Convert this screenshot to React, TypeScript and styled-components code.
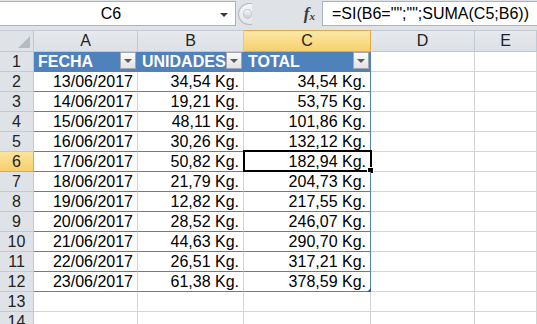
import styled, { createGlobalStyle } from 'styled-components';

const GlobalStyle = createGlobalStyle`
    html, body {
        margin: 0;
        padding: 0;
        background: #ffffff;
        overflow: hidden;
    }
    body {
        font-family: 'Liberation Sans', Arial, sans-serif;
    }
`;

const rows: [string, string, string][] = [
    ['13/06/2017', '34,54 Kg.', '34,54 Kg.'],
    ['14/06/2017', '19,21 Kg.', '53,75 Kg.'],
    ['15/06/2017', '48,11 Kg.', '101,86 Kg.'],
    ['16/06/2017', '30,26 Kg.', '132,12 Kg.'],
    ['17/06/2017', '50,82 Kg.', '182,94 Kg.'],
    ['18/06/2017', '21,79 Kg.', '204,73 Kg.'],
    ['19/06/2017', '12,82 Kg.', '217,55 Kg.'],
    ['20/06/2017', '28,52 Kg.', '246,07 Kg.'],
    ['21/06/2017', '44,63 Kg.', '290,70 Kg.'],
    ['22/06/2017', '26,51 Kg.', '317,21 Kg.'],
    ['23/06/2017', '61,38 Kg.', '378,59 Kg.'],
];

const headers = ['FECHA', 'UNIDADES', 'TOTAL'];
const columns = ['A', 'B', 'C', 'D', 'E'];

const App = () => {
    return (
        <Page>
            <GlobalStyle />
            <FormulaBar>
                <NameBox>
                    <NameText>C6</NameText>
                    <NameArrow />
                </NameBox>
                <FxZone>
                    <Knob>
                        <KnobDot />
                    </Knob>
                    <FxLabel>
                        f<sub>x</sub>
                    </FxLabel>
                </FxZone>
                <FormulaInput>=SI(B6="";"";SUMA(C5;B6))</FormulaInput>
            </FormulaBar>
            <Sheet>
                <Corner>
                    <CornerTriangle />
                </Corner>
                {columns.map((c) => (
                    <ColHeader key={c} $active={c === 'C'}>
                        {c}
                    </ColHeader>
                ))}

                <RowHeader $active={false}>1</RowHeader>
                {headers.map((h, i) => (
                    <HeadCell key={h} $edge={i === 2}>
                        <HeadText>{h}</HeadText>
                        <FilterButton>
                            <FilterArrow />
                        </FilterButton>
                    </HeadCell>
                ))}
                <Cell />
                <Cell />

                {rows.map((r, ri) => {
                    const rowNum = ri + 2;
                    const last = ri === rows.length - 1;
                    return [
                        <RowHeader key={`h${rowNum}`} $active={rowNum === 6}>
                            {rowNum}
                        </RowHeader>,
                        ...r.map((v, ci) => (
                            <DataCell
                                key={`${rowNum}-${ci}`}
                                $edge={ci === 2}
                                $last={last}
                            >
                                {v}
                                {rowNum === 6 && ci === 2 && (
                                    <Selection>
                                        <FillHandle />
                                    </Selection>
                                )}
                                {last && ci === 2 && <ResizeHandle />}
                            </DataCell>
                        )),
                        <Cell key={`d${rowNum}`} />,
                        <Cell key={`e${rowNum}`} />,
                    ];
                })}

                {[13, 14].map((n) => [
                    <RowHeader key={`h${n}`} $active={false}>
                        {n}
                    </RowHeader>,
                    ...columns.map((c) => <Cell key={`${n}${c}`} />),
                ])}
            </Sheet>
        </Page>
    );
};

const Page = styled.div`
    width: 537px;
    height: 324px;
    overflow: hidden;
    background: #dfe3e8;
`;

const FormulaBar = styled.div`
    display: flex;
    align-items: stretch;
    height: 26px;
    padding-top: 1px;
    box-sizing: border-box;
    margin-bottom: 4px;
`;

const NameBox = styled.div`
    display: flex;
    align-items: center;
    width: 236px;
    background: #ffffff;
    border: 1px solid #abb3bd;
    border-left: none;
    box-sizing: border-box;
`;

const NameText = styled.div`
    flex: 1;
    text-align: center;
    font-size: 16px;
    line-height: 24px;
    color: #000;
    padding-left: 2px;
`;

const NameArrow = styled.div`
    width: 0;
    height: 0;
    margin: 2px 7px 0 0;
    border-left: 4px solid transparent;
    border-right: 4px solid transparent;
    border-top: 4px solid #3c3c3c;
`;

const FxZone = styled.div`
    display: flex;
    align-items: center;
    width: 86px;
    padding-left: 2px;
    box-sizing: border-box;
`;

const Knob = styled.div`
    display: flex;
    align-items: center;
    justify-content: center;
    width: 14px;
    height: 22px;
    border: 1px solid #b4bac2;
    border-right: none;
    border-radius: 11px 0 0 11px;
    background: linear-gradient(#f4f5f7, #e3e6ea);
    box-sizing: border-box;
`;

const KnobDot = styled.div`
    width: 8px;
    height: 8px;
    margin-left: 4px;
    border-radius: 50%;
    background: linear-gradient(#f8f8f8, #c9cdd2);
    border: 1px solid #c3c7cc;
`;

const FxLabel = styled.div`
    margin-left: auto;
    margin-right: 7px;
    font-family: 'Liberation Serif', 'Times New Roman', serif;
    font-style: italic;
    font-weight: bold;
    font-size: 17px;
    color: #3a3a3a;

    sub {
        font-size: 11px;
        vertical-align: -1px;
    }
`;

const FormulaInput = styled.div`
    flex: 1;
    background: #ffffff;
    border: 1px solid #abb3bd;
    border-right: none;
    box-sizing: border-box;
    padding-left: 9px;
    font-size: 16px;
    line-height: 24px;
    color: #000;
    white-space: nowrap;
`;

const Sheet = styled.div`
    display: grid;
    grid-template-columns: 34px 104px 106px 127px 104px 1fr;
    grid-template-rows: 22px;
    grid-auto-rows: 20px;
    background: #ffffff;
`;

const Corner = styled.div`
    position: relative;
    background: #dfe3e8;
    border-right: 1px solid #c3c9d0;
    border-bottom: 1px solid #c3c9d0;
    border-top: 1px solid #c3c9d0;
    box-sizing: border-box;
    display: flex;
    align-items: flex-end;
    justify-content: flex-end;
    padding: 0 3px 3px 0;
`;

const CornerTriangle = styled.div`
    width: 0;
    height: 0;
    border-left: 12px solid transparent;
    border-bottom: 12px solid #b6bbc2;
`;

interface ActiveProps {
    $active: boolean;
}

const ColHeader = styled.div<ActiveProps>`
    text-align: center;
    font-size: 16px;
    line-height: 19px;
    color: #222;
    box-sizing: border-box;
    border-top: 1px solid ${(p) => (p.$active ? '#e5a847' : '#c3c9d0')};
    border-right: 1px solid ${(p) => (p.$active ? '#e5a847' : '#c3c9d0')};
    border-bottom: 1px solid ${(p) => (p.$active ? '#e5a847' : '#c3c9d0')};
    background: ${(p) =>
        p.$active
            ? 'linear-gradient(#fbe8a8, #f7d06a)'
            : 'linear-gradient(#e6e9ed, #dde1e6)'};
`;

const RowHeader = styled.div<ActiveProps>`
    text-align: center;
    font-size: 16px;
    line-height: 19px;
    color: #222;
    box-sizing: border-box;
    border-right: 1px solid ${(p) => (p.$active ? '#e5a847' : '#c3c9d0')};
    border-bottom: 1px solid ${(p) => (p.$active ? '#e5a847' : '#c3c9d0')};
    background: ${(p) =>
        p.$active ? 'linear-gradient(#fbe4a0, #f7cf68)' : '#dfe3e8'};
`;

const Cell = styled.div`
    box-sizing: border-box;
    border-right: 1px solid #d4d4d4;
    border-bottom: 1px solid #d4d4d4;
    background: #ffffff;
`;

interface EdgeProps {
    $edge: boolean;
}

const HeadCell = styled.div<EdgeProps>`
    display: flex;
    align-items: flex-start;
    box-sizing: border-box;
    background: #4f81bd;
    border-right: 1px solid #4f81bd;
    border-bottom: 1px solid #4f81bd;
    padding: 0 1px 0 4px;
    overflow: hidden;
`;

const HeadText = styled.div`
    flex: 1;
    min-width: 0;
    overflow: hidden;
    white-space: nowrap;
    color: #ffffff;
    font-weight: bold;
    font-size: 16px;
    line-height: 19px;
`;

const FilterButton = styled.div`
    display: flex;
    align-items: center;
    justify-content: center;
    flex: none;
    width: 16px;
    height: 17px;
    box-sizing: border-box;
    border: 1px solid #a3a8ae;
    background: linear-gradient(#fbfbfb, #e1e3e6);
`;

const FilterArrow = styled.div`
    width: 0;
    height: 0;
    margin-top: 1px;
    border-left: 4px solid transparent;
    border-right: 4px solid transparent;
    border-top: 4px solid #595959;
`;

interface DataProps extends EdgeProps {
    $last: boolean;
}

const DataCell = styled.div<DataProps>`
    position: relative;
    box-sizing: border-box;
    background: #ffffff;
    border-right: 1px solid ${(p) => (p.$edge ? '#4f81bd' : '#d4d4d4')};
    border-bottom: 1px solid #4f81bd;
    padding-right: 4px;
    text-align: right;
    font-size: 16px;
    line-height: 19px;
    color: #000;
    white-space: nowrap;
`;

const Selection = styled.div`
    position: absolute;
    top: -2px;
    left: -1px;
    right: -2px;
    bottom: -1px;
    border: 2px solid #000;
`;

const FillHandle = styled.div`
    position: absolute;
    right: -4px;
    bottom: -4px;
    width: 5px;
    height: 5px;
    background: #000;
    border: 1px solid #fff;
`;

const ResizeHandle = styled.div`
    position: absolute;
    right: -1px;
    bottom: -1px;
    width: 0;
    height: 0;
    border-left: 4px solid transparent;
    border-bottom: 4px solid #2f5d9b;
`;

export default App;
